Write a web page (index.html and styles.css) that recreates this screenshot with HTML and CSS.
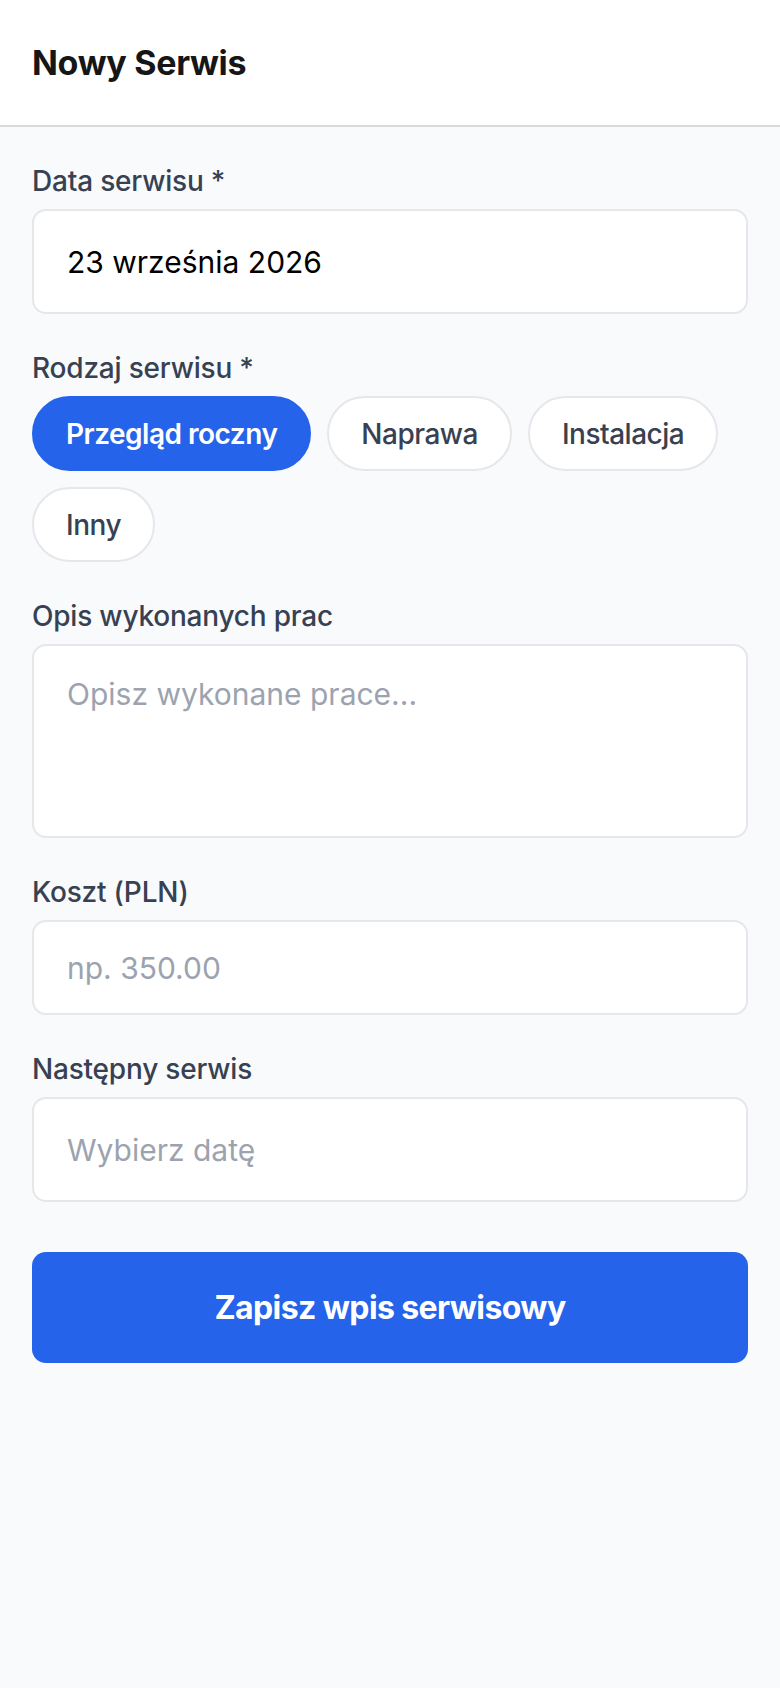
FILE: index.html
```html
<!DOCTYPE html>
<html lang="pl">
<head>
    <meta charset="UTF-8">
    <meta name="viewport" content="width=device-width, initial-scale=1.0">
    <title>Nowy Serwis</title>
    <link rel="stylesheet" href="styles.css">
</head>
<body>
    <div class="header">
        <h1>Nowy Serwis</h1>
    </div>

    <form class="form">
        <div class="field">
            <label>Data serwisu *</label>
            <input class="input date" type="text" value="23 września 2026" readonly>
        </div>

        <div class="field">
            <label>Rodzaj serwisu *</label>
            <div class="chips">
                <button type="button" class="chip active">Przegląd roczny</button>
                <button type="button" class="chip">Naprawa</button>
                <button type="button" class="chip">Instalacja</button>
                <button type="button" class="chip">Inny</button>
            </div>
        </div>

        <div class="field">
            <label>Opis wykonanych prac</label>
            <textarea class="input area" placeholder="Opisz wykonane prace..."></textarea>
        </div>

        <div class="field">
            <label>Koszt (PLN)</label>
            <input class="input" type="text" placeholder="np. 350.00">
        </div>

        <div class="field">
            <label>Następny serwis</label>
            <input class="input date" type="text" placeholder="Wybierz datę">
        </div>

        <button type="button" class="submit">Zapisz wpis serwisowy</button>
    </form>
</body>
</html>
```

FILE: styles.css
```css
* {
    margin: 0;
    padding: 0;
    box-sizing: border-box;
    font-family: Inter, 'Noto Sans', sans-serif;
}

body {
    background-color: #f8fafc;
    color: #374151;
}

.header {
    height: 127px;
    padding: 0 32px;
    display: flex;
    align-items: center;
    background: white;
    border-bottom: 2px solid #d9dadd;
}

h1 {
    color: #161616;
    font-size: 34px;
    font-weight: 700;
    letter-spacing: -0.3px;
}

.form {
    padding: 37px 32px;
}

.field {
    margin-bottom: 37px;
}

label {
    display: block;
    font-size: 28px;
    line-height: 34px;
    font-weight: 500;
    color: #374151;
    letter-spacing: -0.2px;
    margin-bottom: 11px;
}

.input {
    display: block;
    width: 100%;
    height: 95px;
    padding: 0 33px;
    background: white;
    border: 2px solid #e5e7eb;
    border-radius: 14px;
    font-size: 30px;
    color: #000;
    outline: none;
}

.input.date {
    height: 105px;
}

.input.area {
    height: 194px;
    padding: 30px 33px;
    line-height: 36px;
    resize: none;
}

.input::placeholder {
    color: #9ca3af;
}

.chips {
    display: flex;
    flex-wrap: wrap;
    gap: 16px;
}

.chip {
    height: 75px;
    padding: 0 32px;
    background: white;
    border: 2px solid #e5e7eb;
    border-radius: 999px;
    font-size: 28px;
    font-weight: 500;
    letter-spacing: -0.5px;
    color: #374151;
}

.chip.active {
    background: #2563eb;
    border-color: #2563eb;
    color: white;
    font-weight: 600;
}

.submit {
    display: block;
    width: 100%;
    height: 111px;
    margin-top: 50px;
    background: #2563eb;
    border: none;
    border-radius: 14px;
    font-size: 32px;
    font-weight: 700;
    letter-spacing: -0.6px;
    color: white;
}
```
